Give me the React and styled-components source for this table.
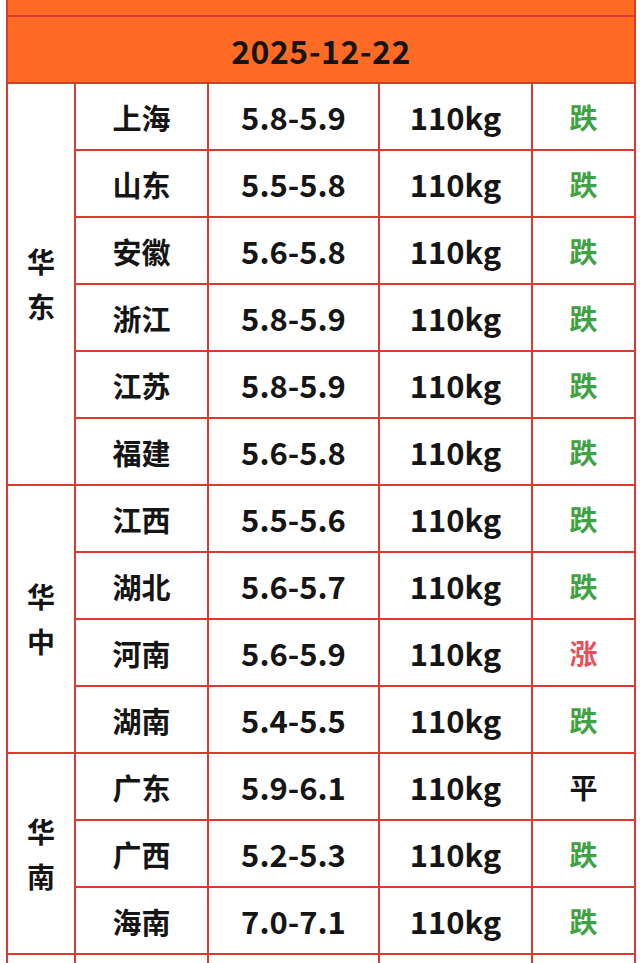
import React from 'react'
import styled, { createGlobalStyle } from 'styled-components'

const GlobalStyle = createGlobalStyle`
  body {
    margin: 0;
    background: #fff;
    font-family: "Noto Sans CJK SC", "Noto Sans", sans-serif;
  }
`

const Page = styled.div`
  width: 640px;
  height: 963px;
  overflow: hidden;
  padding-left: 6px;
  box-sizing: border-box;
`

const Table = styled.table`
  border-collapse: collapse;
  table-layout: fixed;
  width: 628px;
  margin-top: -2px;

  td {
    border: 2px solid #dc3a2e;
    padding: 0;
    text-align: center;
    vertical-align: middle;
    font-weight: 700;
    color: #151515;
  }
`

const Col = styled.col`
  width: ${(p) => p.$w}px;
`

const BandRow = styled.tr`
  height: 17px;
  td { background: #ff6a24; }
`

const DateRow = styled.tr`
  height: 67px;
  td {
    background: #ff6a24;
    font-size: 32px;
    letter-spacing: 0.5px;
  }
`

const DataRow = styled.tr`
  height: 67px;
`

const Place = styled.td`
  && { font-size: 29px; }
`

const Num = styled.td`
  && { font-size: 31px; }
`

const Region = styled.td`
  && { font-size: 28px; }
`

const RegionText = styled.div`
  display: flex;
  flex-direction: column;
  align-items: center;
  gap: 6px;
  line-height: 39px;
`

const Trend = styled.td`
  && {
    color: ${(p) => (p.$kind === '涨' ? '#e2525c' : p.$kind === '跌' ? '#3fa244' : '#151515')};
    font-size: 28px;
  }
`

const groups = [
  {
    name: '华东',
    rows: [
      ['上海', '5.8-5.9', '跌'],
      ['山东', '5.5-5.8', '跌'],
      ['安徽', '5.6-5.8', '跌'],
      ['浙江', '5.8-5.9', '跌'],
      ['江苏', '5.8-5.9', '跌'],
      ['福建', '5.6-5.8', '跌'],
    ],
  },
  {
    name: '华中',
    rows: [
      ['江西', '5.5-5.6', '跌'],
      ['湖北', '5.6-5.7', '跌'],
      ['河南', '5.6-5.9', '涨'],
      ['湖南', '5.4-5.5', '跌'],
    ],
  },
  {
    name: '华南',
    rows: [
      ['广东', '5.9-6.1', '平'],
      ['广西', '5.2-5.3', '跌'],
      ['海南', '7.0-7.1', '跌'],
    ],
  },
]

const App = () => {
  return (
    <>
      <GlobalStyle />
      <Page>
        <Table>
          <colgroup>
            <Col $w={68} />
            <Col $w={133} />
            <Col $w={171} />
            <Col $w={153} />
            <Col $w={103} />
          </colgroup>
          <tbody>
            <BandRow>
              <td colSpan={5}></td>
            </BandRow>
            <DateRow>
              <td colSpan={5}>2025-12-22</td>
            </DateRow>
            {groups.map((g) =>
              g.rows.map((r, i) => (
                <DataRow key={g.name + r[0]}>
                  {i === 0 && (
                    <Region rowSpan={g.rows.length}>
                      <RegionText>
                        <span>{g.name[0]}</span>
                        <span>{g.name[1]}</span>
                      </RegionText>
                    </Region>
                  )}
                  <Place>{r[0]}</Place>
                  <Num>{r[1]}</Num>
                  <Num>110kg</Num>
                  <Trend $kind={r[2]}>{r[2]}</Trend>
                </DataRow>
              ))
            )}
            <DataRow>
              <td></td>
              <td></td>
              <td></td>
              <td></td>
              <td></td>
            </DataRow>
          </tbody>
        </Table>
      </Page>
    </>
  )
}

export default App
